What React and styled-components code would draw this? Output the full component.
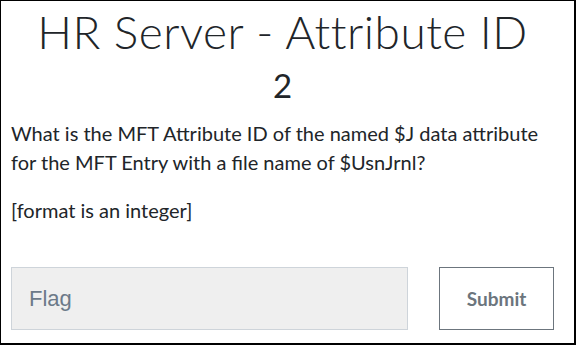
import React from 'react';
import styled, { createGlobalStyle } from 'styled-components';

const GlobalStyle = createGlobalStyle`
    html, body {
        margin: 0;
        padding: 0;
        background: #fff;
    }
    * {
        box-sizing: border-box;
    }
`;

const ChallengeBox = styled.div`
    width: 576px;
    height: 345px;
    border-style: solid;
    border-color: #000;
    border-width: 1px 2px 2px 1px;
    padding: 0 20px 0 10px;
    overflow: hidden;
    background: #fff;
`;

const Title = styled.h1`
    margin: 0;
    padding-top: 5px;
    text-align: center;
    font-family: 'Lato', sans-serif;
    font-weight: 300;
    font-size: 46px;
    line-height: 52px;
    letter-spacing: 0.5px;
    color: #212529;
`;

const Value = styled.h2`
    margin: 7px 0 0;
    text-align: center;
    font-family: 'Lato', sans-serif;
    font-weight: 400;
    font-size: 33px;
    line-height: 40px;
    color: #212529;
`;

const Description = styled.div`
    margin-top: 14px;
    font-family: 'Lato', sans-serif;
    font-size: 20px;
    line-height: 29px;
    color: #212529;

    p {
        margin: 0 0 19px;
    }

    p:last-child {
        margin-bottom: 0;
    }
`;

const FlagForm = styled.form`
    display: flex;
    gap: 31px;
    margin-top: 42px;
`;

const FlagInput = styled.input`
    width: 398px;
    height: 63px;
    padding: 0 17px;
    background: #efefef;
    border: 1px solid #ced4da;
    border-radius: 0;
    font-family: 'Liberation Sans', Arial, sans-serif;
    font-size: 22px;
    color: #495057;
    outline: none;

    &::placeholder {
        color: #6c7a89;
    }
`;

const SubmitButton = styled.button`
    width: 115px;
    height: 63px;
    background: #fff;
    border: 1px solid #6c757d;
    border-radius: 0;
    font-family: 'Lato', sans-serif;
    font-weight: 700;
    font-size: 19px;
    color: #6c757d;
    cursor: pointer;
`;

const App = () => {
    return (
        <>
            <GlobalStyle />
            <ChallengeBox>
                <Title>HR Server - Attribute ID</Title>
                <Value>2</Value>
                <Description>
                    <p>What is the MFT Attribute ID of the named $J data attribute for the MFT Entry with a file name of $UsnJrnl?</p>
                    <p>[format is an integer]</p>
                </Description>
                <FlagForm onSubmit={e => e.preventDefault()}>
                    <FlagInput type="text" placeholder="Flag" />
                    <SubmitButton type="submit">Submit</SubmitButton>
                </FlagForm>
            </ChallengeBox>
        </>
    );
};

export default App;
